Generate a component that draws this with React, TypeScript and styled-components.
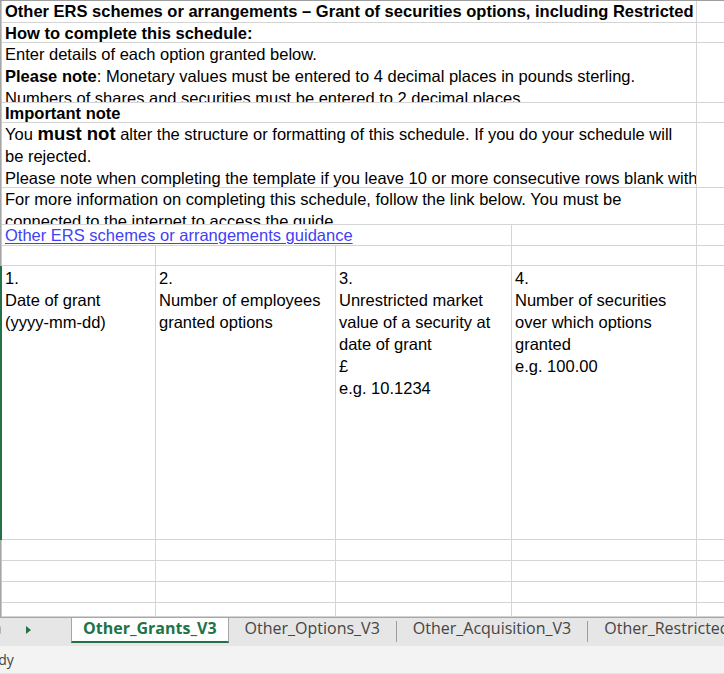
import React from 'react'
import styled, { createGlobalStyle } from 'styled-components'

const GlobalStyle = createGlobalStyle`
  html, body {
    margin: 0;
    padding: 0;
    background: #fff;
  }
  body {
    font-family: 'Liberation Sans', Arial, sans-serif;
  }
`

const Window = styled.div`
  width: 724px;
  height: 674px;
  display: flex;
  flex-direction: column;
  overflow: hidden;
  background: #fff;
`

const Sheet = styled.div`
  flex: 1;
  min-height: 0;
  display: grid;
  grid-template-columns: 2px 154px 180px 176px 185px 1fr;
  grid-template-rows: 22px 20px 60px 20px 65px 37px 21px 20px 274px 21px 21px 21px 1fr;
  border-top: 1px solid #9e9e9e;
  overflow: hidden;
  font-family: 'Liberation Sans', Arial, sans-serif;
  font-size: 16.5px;
  color: #000;
`

const RowEdge = styled.div<{ $active?: boolean }>`
  box-sizing: border-box;
  background: ${(p) => (p.$active ? '#217346' : '#fff')};
  border-left: ${(p) => (p.$active ? 'none' : '1px solid #a6a6a6')};
  border-right: ${(p) => (p.$active ? 'none' : '1px solid #c8c8c8')};
`

const Cell = styled.div<{
  $span?: number
  $lh?: number
  $top?: number
  $bold?: boolean
  $last?: boolean
}>`
  grid-column: span ${(p) => p.$span ?? 1};
  box-sizing: border-box;
  border-right: ${(p) => (p.$last ? 'none' : '1px solid #d4d4d4')};
  border-bottom: 1px solid #d4d4d4;
  padding: ${(p) => p.$top ?? 0}px 3px 0;
  overflow: hidden;
  white-space: nowrap;
  line-height: ${(p) => p.$lh ?? 22}px;
  font-weight: ${(p) => (p.$bold ? 700 : 400)};
`

const Line = styled.div``

const Strong = styled.b`
  font-size: 18.5px;
  line-height: 1;
`

const Emph = styled.b``

const Link = styled.a`
  color: #4141f5;
  text-decoration: underline;
  text-underline-offset: 2px;
`

const TabBar = styled.div`
  height: 29px;
  box-sizing: border-box;
  border-top: 1px solid #a6a6a6;
  background: #e6e6e6;
  display: flex;
  align-items: flex-start;
  font-family: 'Open Sans', 'Noto Sans', sans-serif;
  font-size: 16px;
  color: #444;
  white-space: nowrap;
  overflow: hidden;
`

const TabNav = styled.div`
  width: 71px;
  height: 23px;
  flex: none;
  display: flex;
  align-items: center;
  gap: 25px;
`

const Arrow = styled.span<{ $dir: 'left' | 'right' }>`
  width: 0;
  height: 0;
  border-top: 4px solid transparent;
  border-bottom: 4px solid transparent;
  ${(p) =>
    p.$dir === 'left'
      ? 'border-right: 5px solid #b4b4b4; margin-left: -4px;'
      : 'border-left: 5px solid #217346;'}
`

const Tab = styled.div<{ $active?: boolean }>`
  flex: none;
  box-sizing: border-box;
  height: ${(p) => (p.$active ? 25 : 23)}px;
  padding: 0 ${(p) => (p.$active ? 11 : 16)}px 3px;
  display: flex;
  align-items: center;
  ${(p) =>
    p.$active &&
    `
    background: #fff;
    color: #217346;
    font-weight: 700;
    border-left: 1px solid #a6a6a6;
    border-right: 1px solid #a6a6a6;
    border-bottom: 2px solid #217346;
  `}
`

const TabSep = styled.div`
  flex: none;
  width: 1px;
  height: 21px;
  margin-top: 3px;
  background: #9c9c9c;
`

const StatusBar = styled.div`
  height: 28px;
  box-sizing: border-box;
  background: #f3f3f3;
  border-bottom: 1px solid #dfe3ea;
  display: flex;
  align-items: center;
  font-family: 'Open Sans', 'Noto Sans', sans-serif;
  font-size: 14px;
  color: #444;
  overflow: hidden;
`

const StatusText = styled.span`
  margin-left: -26px;
`

const headers: string[][] = [
  ['1.', 'Date of grant', '(yyyy-mm-dd)'],
  ['2.', 'Number of employees', 'granted options'],
  ['3.', 'Unrestricted market', 'value of a security at', 'date of grant', '£', 'e.g. 10.1234'],
  ['4.', 'Number of securities', 'over which options', 'granted', 'e.g. 100.00'],
]

const tabs = ['Other_Grants_V3', 'Other_Options_V3', 'Other_Acquisition_V3', 'Other_Restricted_V3']

const EmptyRow = ({ active }: { active?: boolean }) => (
  <>
    <RowEdge $active={active} />
    <Cell />
    <Cell />
    <Cell />
    <Cell />
    <Cell $last />
  </>
)

const App = () => {
  return (
    <Window>
      <GlobalStyle />
      <Sheet>
        <RowEdge />
        <Cell $span={4} $lh={20} $bold>
          Other ERS schemes or arrangements – Grant of securities options, including Restricted
        </Cell>
        <Cell $last />

        <RowEdge />
        <Cell $span={4} $lh={20} $bold>
          How to complete this schedule:
        </Cell>
        <Cell $last />

        <RowEdge />
        <Cell $span={4}>
          <Line>Enter details of each option granted below.</Line>
          <Line>
            <Emph>Please note</Emph>: Monetary values must be entered to 4 decimal places in pounds sterling.
          </Line>
          <Line>Numbers of shares and securities must be entered to 2 decimal places.</Line>
        </Cell>
        <Cell $last />

        <RowEdge />
        <Cell $span={4} $lh={20} $bold>
          Important note
        </Cell>
        <Cell $last />

        <RowEdge />
        <Cell $span={4}>
          <Line>
            You <Strong>must not</Strong> alter the structure or formatting of this schedule. If you do your schedule will
          </Line>
          <Line>be rejected.</Line>
          <Line>Please note when completing the template if you leave 10 or more consecutive rows blank with</Line>
        </Cell>
        <Cell $last />

        <RowEdge />
        <Cell $span={4}>
          <Line>For more information on completing this schedule, follow the link below. You must be</Line>
          <Line>connected to the internet to access the guide.</Line>
        </Cell>
        <Cell $last />

        <RowEdge />
        <Cell $span={3} $lh={20}>
          <Link>Other ERS schemes or arrangements guidance</Link>
        </Cell>
        <Cell />
        <Cell $last />

        <EmptyRow />

        <RowEdge $active />
        {headers.map((lines, i) => (
          <Cell key={i} $top={1}>
            {lines.map((l) => (
              <Line key={l}>{l}</Line>
            ))}
          </Cell>
        ))}
        <Cell $last />

        <EmptyRow />
        <EmptyRow />
        <EmptyRow />
        <EmptyRow />
      </Sheet>

      <TabBar>
        <TabNav>
          <Arrow $dir="left" />
          <Arrow $dir="right" />
        </TabNav>
        {tabs.map((t, i) => (
          <React.Fragment key={t}>
            {i > 1 && <TabSep />}
            <Tab $active={i === 0}>{t}</Tab>
          </React.Fragment>
        ))}
      </TabBar>

      <StatusBar>
        <StatusText>Ready</StatusText>
      </StatusBar>
    </Window>
  )
}

export default App
